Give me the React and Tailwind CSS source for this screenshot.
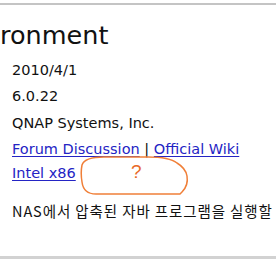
import React from 'react';

const Scribble = () => (
  <svg
    className="absolute left-[78px] top-[152px]"
    width="115"
    height="46"
    viewBox="0 0 115 46"
    fill="none"
  >
    <path
      d="M4 13 C6 7, 14 5, 26 5 L70 5 C84 5, 94 7, 99 11 C104 14, 108 18, 109 24 C110 30, 108 36, 104 40 L102 42 L18 42 C10 42, 5 38, 4 30 C3 24, 3 18, 4 13 Z"
      stroke="#f07f38"
      strokeWidth="1.5"
      strokeLinejoin="round"
    />
  </svg>
);

export default function App() {
  const link = 'text-[#2424c4] underline underline-offset-2';

  return (
    <div className="relative w-[276px] h-[260px] bg-white overflow-hidden font-['DejaVu_Sans',sans-serif] text-[#111]">
      <div className="h-[3px]" />
      <div className="h-[2px] bg-[#c4c4c4]" />

      <h1 className="mt-[15px] h-[30px] text-[25.5px] leading-[30px] whitespace-nowrap">ronment</h1>

      <ul className="mt-[7px] pl-[12px] text-[14.5px] leading-[26px] whitespace-nowrap">
        <li>2010/4/1</li>
        <li>6.0.22</li>
        <li className="mt-[1px]">QNAP Systems, Inc.</li>
        <li>
          <span className={link}>Forum Discussion</span> | <span className={link}>Official Wiki</span>
        </li>
        <li className="-mt-[2px]">
          <span className={link}>Intel x86</span>
        </li>
        <li className="mt-[12px] font-['Noto_Sans_CJK_KR',sans-serif] text-[14.5px] tracking-[0.9px]">
          NAS에서 압축된 자바 프로그램을 실행할
        </li>
      </ul>

      <Scribble />
      <span className="absolute left-[131px] top-[161px] text-[19px] leading-[22px] text-[#e86a28] font-['Liberation_Sans',sans-serif]">
        ?
      </span>

      <div className="absolute left-0 right-0 top-[256px] h-[3px] bg-[#d2d2d2]" />
    </div>
  );
}
